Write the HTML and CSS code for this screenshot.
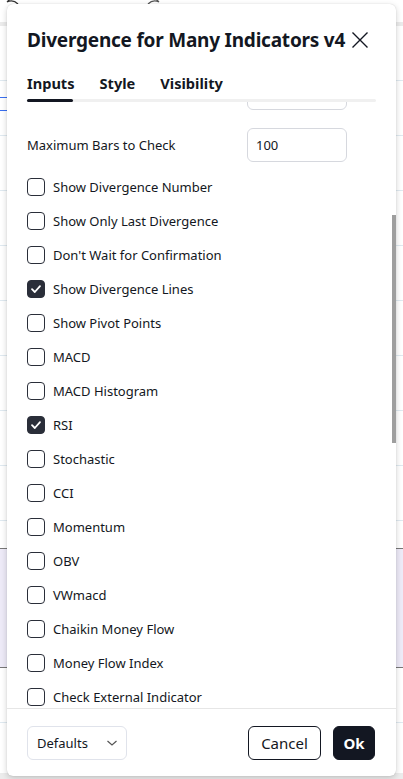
FILE: index.html
```html
<!DOCTYPE html>
<html>
<head>
<meta charset="utf-8">
<link rel="stylesheet" href="styles.css">
</head>
<body>
<div class="chart">
  <div class="toolbar">
    <svg class="tb-icon" width="14" height="8" viewBox="0 0 14 8"><path d="M4 1 L1 4 M1 4 Q7 1 12 6" fill="none" stroke="#333" stroke-width="1.2"/></svg>
    <svg class="tb-icon redo" width="14" height="8" viewBox="0 0 14 8"><path d="M10 1 L13 4 M13 4 Q7 1 2 6" fill="none" stroke="#555" stroke-width="1.2"/></svg>
  </div>
  <div class="tb-sep"></div>
  <div class="pane main-pane">
    <div class="blue l1"></div>
    <div class="blue l2"></div>
  </div>
  <div class="pane ind-pane"></div>
  <div class="pane low-pane"></div>
</div>

<div class="dialog">
  <div class="header">
    <h1 class="title">Divergence for Many Indicators v4</h1>
    <svg class="close" width="18" height="18" viewBox="0 0 18 18"><path d="M1.5 1.5 L16.5 16.5 M16.5 1.5 L1.5 16.5" stroke="#131722" stroke-width="1.4" fill="none"/></svg>
  </div>
  <div class="tabs">
    <div class="tab-labels">
      <span class="tab">Inputs</span>
      <span class="tab">Style</span>
      <span class="tab">Visibility</span>
    </div>
    <div class="tab-track"><div class="tab-active"></div></div>
  </div>
  <div class="scroll">
    <div class="content">
      <div class="row input-row">
        <span class="label"></span>
        <div class="input"></div>
      </div>
      <div class="row input-row">
        <span class="label">Maximum Bars to Check</span>
        <div class="input">100</div>
      </div>
      <div class="checks">
        <div class="check-row"><span class="box"></span><span class="label">Show Divergence Number</span></div>
        <div class="check-row"><span class="box"></span><span class="label">Show Only Last Divergence</span></div>
        <div class="check-row"><span class="box"></span><span class="label">Don't Wait for Confirmation</span></div>
        <div class="check-row"><span class="box on"><svg width="12" height="10" viewBox="0 0 12 10"><path d="M2 5.2 L4.8 8 L10 2.2" stroke="#fff" stroke-width="1.8" fill="none" stroke-linecap="round" stroke-linejoin="round"/></svg></span><span class="label">Show Divergence Lines</span></div>
        <div class="check-row"><span class="box"></span><span class="label">Show Pivot Points</span></div>
        <div class="check-row"><span class="box"></span><span class="label">MACD</span></div>
        <div class="check-row"><span class="box"></span><span class="label">MACD Histogram</span></div>
        <div class="check-row"><span class="box on"><svg width="12" height="10" viewBox="0 0 12 10"><path d="M2 5.2 L4.8 8 L10 2.2" stroke="#fff" stroke-width="1.8" fill="none" stroke-linecap="round" stroke-linejoin="round"/></svg></span><span class="label">RSI</span></div>
        <div class="check-row"><span class="box"></span><span class="label">Stochastic</span></div>
        <div class="check-row"><span class="box"></span><span class="label">CCI</span></div>
        <div class="check-row"><span class="box"></span><span class="label">Momentum</span></div>
        <div class="check-row"><span class="box"></span><span class="label">OBV</span></div>
        <div class="check-row"><span class="box"></span><span class="label">VWmacd</span></div>
        <div class="check-row"><span class="box"></span><span class="label">Chaikin Money Flow</span></div>
        <div class="check-row"><span class="box"></span><span class="label">Money Flow Index</span></div>
        <div class="check-row"><span class="box"></span><span class="label">Check External Indicator</span></div>
      </div>
    </div>
    <div class="scrollbar"></div>
  </div>
  <div class="footer">
    <div class="select">Defaults
      <svg width="12" height="8" viewBox="0 0 12 8"><path d="M1.5 2 L6 6 L10.5 2" stroke="#555" stroke-width="1.2" fill="none"/></svg>
    </div>
    <div class="buttons">
      <button class="btn cancel">Cancel</button>
      <button class="btn ok">Ok</button>
    </div>
  </div>
</div>
</body>
</html>
```

FILE: styles.css
```css
* { box-sizing: border-box; }
html, body { margin: 0; padding: 0; }
body {
  width: 403px;
  height: 779px;
  overflow: hidden;
  position: relative;
  background: #fff;
  font-family: "Noto Sans", "Open Sans", sans-serif;
  color: #131722;
}
.chart {
  display: flex;
  flex-direction: column;
  height: 779px;
}
.toolbar {
  height: 22px;
  display: flex;
  gap: 6px;
  padding-left: 6px;
  align-items: flex-start;
}
.tb-icon { margin-top: -2px; }
.redo { margin-left: 120px; }
.tb-sep { height: 4px; background: #ebebeb; }
.pane {
  position: relative;
  background:
    repeating-linear-gradient(to bottom, transparent 0, transparent 54px, #dfe9f0 54px, #dfe9f0 55px);
}
.main-pane { height: 522px; }
.blue { position: absolute; left: 0; width: 8px; height: 1px; background: #3a6ff0; }
.l1 { top: 71px; }
.l2 { top: 84px; }
.ind-pane {
  height: 120px;
  background: #edeaf7;
  border-top: 1px solid #777;
  border-bottom: 1px solid #777;
}
.low-pane { flex: 1; border-bottom: 6px solid #ececec; }

.dialog {
  position: absolute;
  left: 7px;
  top: 4px;
  width: 389px;
  height: 772px;
  background: #fff;
  border-radius: 6px;
  box-shadow: 0 2px 6px rgba(0,0,0,0.18), 0 0 1px rgba(0,0,0,0.2);
  display: flex;
  flex-direction: column;
  overflow: hidden;
}
.header {
  display: flex;
  align-items: center;
  justify-content: space-between;
  padding: 22px 27px 0 20px;
  height: 50px;
}
.title {
  margin: 0;
  font-size: 19px;
  font-weight: 700;
  line-height: 24px;
  letter-spacing: -0.22px;
  white-space: nowrap;
}
.close { flex: none; }
.tabs {
  padding: 0 20px;
  margin-top: 15px;
}
.tab-labels {
  display: flex;
  gap: 25px;
  height: 28px;
  align-items: center;
}
.tab {
  font-size: 14.6px;
  font-weight: 700;
  line-height: 20px;
}
.tab-track {
  height: 3px;
  background: #f0f0f0;
  border-radius: 2px;
  margin-top: 2px;
}
.tab-active {
  width: 46px;
  height: 3px;
  background: #131722;
  border-radius: 2px;
}
.scroll {
  flex: 1;
  position: relative;
  overflow: hidden;
}
.content {
  margin-top: -26px;
  padding: 0 20px;
}
.row {
  display: flex;
  align-items: center;
  justify-content: space-between;
}
.input-row { height: 34px; margin-bottom: 18px; }
.input-row:nth-child(2) { margin-bottom: 8px; }
.label {
  font-size: 13px;
  line-height: 18px;
  white-space: nowrap;
}
.input {
  width: 100px;
  height: 34px;
  border: 1px solid #d6d8de;
  border-radius: 6px;
  font-size: 13px;
  line-height: 32px;
  padding-left: 8px;
  margin-right: 29px;
}
.check-row {
  height: 34px;
  display: flex;
  align-items: center;
  gap: 8px;
}
.box {
  width: 18px;
  height: 18px;
  border: 1px solid #2a2e39;
  border-radius: 4px;
  display: flex;
  align-items: center;
  justify-content: center;
  flex: none;
}
.box.on { background: #2a2e39; }
.scrollbar {
  position: absolute;
  left: 385px;
  top: 113px;
  width: 4px;
  height: 228px;
  background: #9e9e9e;
}
.footer {
  height: 68px;
  border-top: 1px solid #e6e6e6;
  display: flex;
  align-items: flex-start;
  justify-content: space-between;
  padding: 17px 20px 0 20px;
}
.select {
  width: 100px;
  height: 34px;
  border: 1px solid #e0e3eb;
  border-radius: 6px;
  display: flex;
  align-items: center;
  justify-content: space-between;
  padding: 0 8px 0 9px;
  font-size: 13px;
}
.buttons { display: flex; gap: 12px; margin-right: 1px; }
.btn {
  height: 34px;
  border-radius: 6px;
  font-family: inherit;
  font-size: 15px;
  padding: 0;
  cursor: pointer;
}
.cancel {
  width: 73px;
  background: #fff;
  border: 1px solid #131722;
  color: #131722;
}
.ok {
  width: 42px;
  background: #131722;
  border: 1px solid #131722;
  color: #fff;
  font-weight: 700;
}
```
